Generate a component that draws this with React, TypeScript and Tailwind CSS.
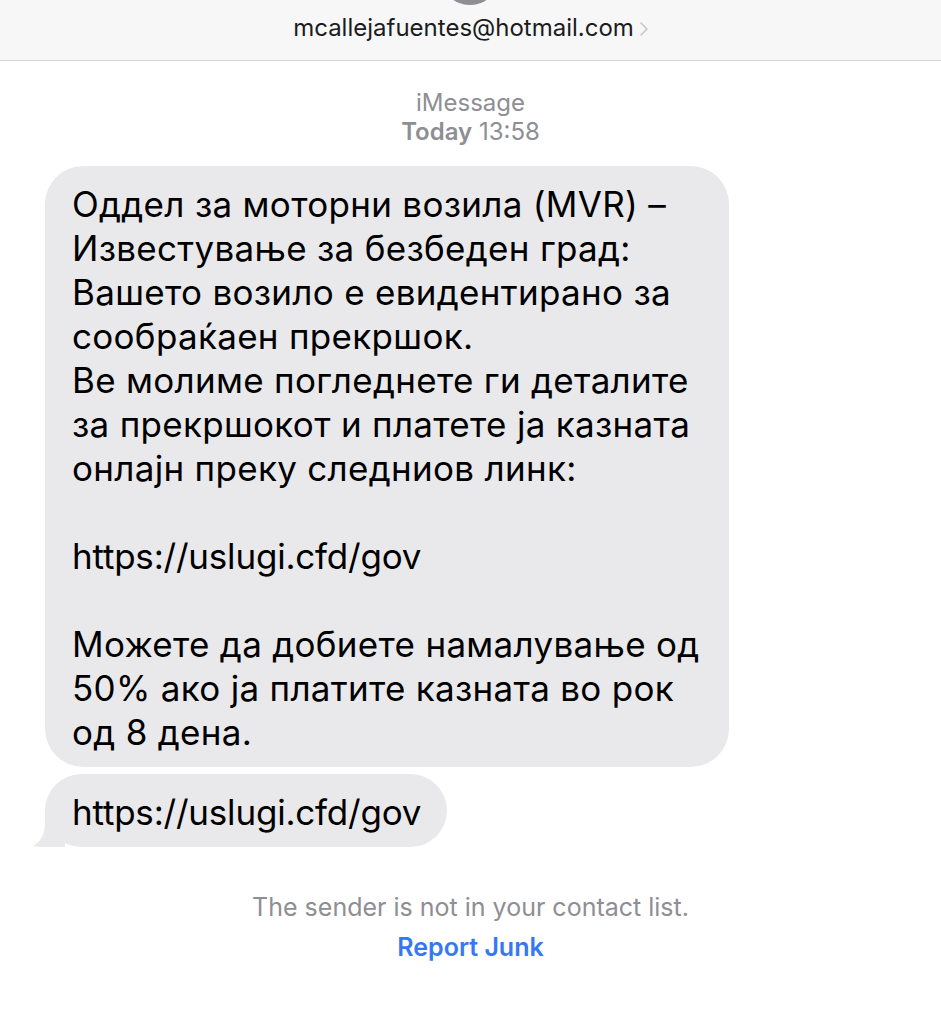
import React from "react";

const font = { fontFamily: "Inter, 'Noto Sans', sans-serif" };

const messageLines = [
  "Оддел за моторни возила (MVR) –",
  "Известување за безбеден град:",
  "Вашето возило е евидентирано за",
  "сообраќаен прекршок.",
  "Ве молиме погледнете ги деталите",
  "за прекршокот и платете ја казната",
  "онлајн преку следниов линк:",
  "",
  "https://uslugi.cfd/gov",
  "",
  "Можете да добиете намалување од",
  "50% ако ја платите казната во рок",
  "од 8 дена.",
];

const Tail = () => (
  <svg
    className="absolute bottom-0 left-[-12px]"
    width="32"
    height="34"
    viewBox="0 0 32 34"
  >
    <path
      d="M12 0 L32 0 L32 34 L12 34 C7 34 3 33.6 0 33 C7 29 12 22 12 10 Z"
      fill="#e9e9eb"
    />
  </svg>
);

export default function App() {
  return (
    <div className="w-[941px] h-[1024px] bg-white overflow-hidden" style={font}>
      {/* header */}
      <div className="relative h-[61px] bg-[#f7f7f7] border-b border-[#d4d4d8] overflow-hidden">
        <div className="absolute left-[440px] top-[-55px] w-[60px] h-[60px] rounded-full bg-[#8e8e93]" />
        <div className="flex justify-center items-center pt-[14px] gap-[6px]">
          <span className="text-[24px] leading-[28px] text-[#1c1c1e]">
            mcallejafuentes@hotmail.com
          </span>
          <svg width="8" height="14" viewBox="0 0 8 14" className="mt-[2px]">
            <path
              d="M1 1 L7 7 L1 13"
              stroke="#c7c7cc"
              strokeWidth="1.6"
              fill="none"
              strokeLinecap="round"
              strokeLinejoin="round"
            />
          </svg>
        </div>
      </div>

      {/* timestamp */}
      <div className="mt-[27px] flex flex-col items-center text-[24px] leading-[29px] text-[#8e8e93]">
        <span>iMessage</span>
        <span>
          <span className="font-semibold">Today</span> 13:58
        </span>
      </div>

      {/* bubbles */}
      <div className="mt-[20px] pl-[45px] flex flex-col items-start gap-[7px]">
        <div className="w-[684px] rounded-[38px] bg-[#e9e9eb] pl-[27px] pr-[10px] pt-[16px] pb-[13px] text-[35px] leading-[44px] text-black tracking-[0.3px]">
          {messageLines.map((line, i) => (
            <div
              key={i}
              className={
                line.startsWith("https")
                  ? "h-[44px] whitespace-nowrap tracking-[-0.2px]"
                  : "h-[44px] whitespace-nowrap"
              }
            >
              {line}
            </div>
          ))}
        </div>
        <div className="relative rounded-[37px] bg-[#e9e9eb] pl-[27px] pr-[26px] pt-[16px] pb-[13px] text-[35px] leading-[44px] text-black tracking-[-0.2px]">
          <Tail />
          <div className="relative">https://uslugi.cfd/gov</div>
        </div>
      </div>

      {/* footer */}
      <div className="mt-[46px] flex flex-col items-center gap-[12px] text-[25px] leading-[28px]">
        <span className="text-[#8e8e93]">The sender is not in your contact list.</span>
        <span className="text-[#3478f6] font-semibold">Report Junk</span>
      </div>
    </div>
  );
}
